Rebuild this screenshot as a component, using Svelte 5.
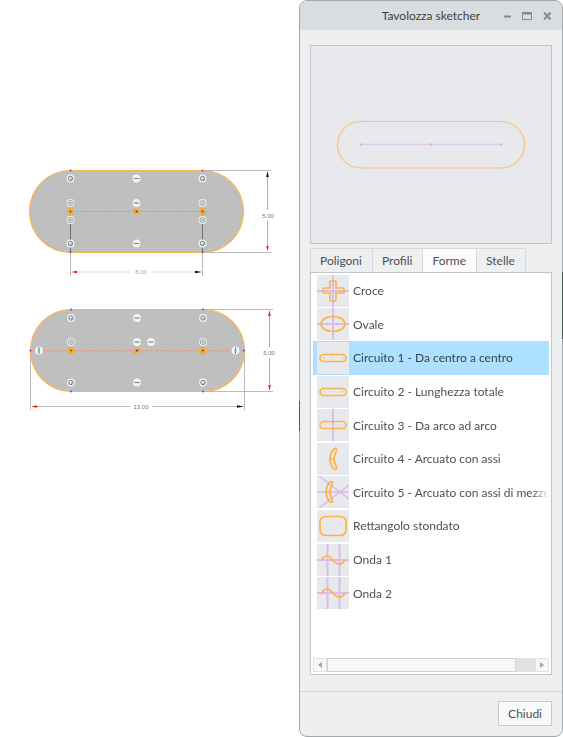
<script>
	const tabs = ['Poligoni', 'Profili', 'Forme', 'Stelle'];
	const shapes = [
		{ icon: 'cross', label: 'Croce' },
		{ icon: 'oval', label: 'Ovale' },
		{ icon: 'slot', label: 'Circuito 1 - Da centro a centro' },
		{ icon: 'slot', label: 'Circuito 2 - Lunghezza totale' },
		{ icon: 'slot-axis', label: 'Circuito 3 - Da arco ad arco' },
		{ icon: 'arc', label: 'Circuito 4 - Arcuato con assi' },
		{ icon: 'arc-axes', label: 'Circuito 5 - Arcuato con assi di mezze' },
		{ icon: 'rounded', label: 'Rettangolo stondato' },
		{ icon: 'wave', label: 'Onda 1' },
		{ icon: 'wave', label: 'Onda 2' }
	];

	let activeTab = $state('Forme');
	let selected = $state(2);
</script>

<!-- constraint badge: tangent, coincident, horizontal or vertical -->
{#snippet badge(kind, x, y)}
	<g transform="translate({x} {y})">
		<circle r="3.9" fill="#f4f4f4" />
		{#if kind === 'tangent'}
			<circle r="2.2" fill="none" stroke="#666" stroke-width="0.9" />
			<path d="M0 0L1.6 1.4" stroke="#48b4d8" stroke-width="1.4" />
		{:else if kind === 'point'}
			<circle r="2.7" fill="#d9e2e4" stroke="#999" stroke-width="0.8" />
			<circle r="1.5" fill="#8fcce0" />
		{:else if kind === 'vertical'}
			<path d="M0 -3V3" stroke="#666" stroke-width="1.1" />
			<circle r="1.2" fill="#79bcd3" />
		{:else}
			<path d="M-2.8 0H2.8" stroke="#888" stroke-width="1.1" />
			{#if kind === 'mid'}<circle r="1.3" fill="#79bcd3" />{/if}
		{/if}
	</g>
{/snippet}

{#snippet center(x, y)}
	<g transform="translate({x} {y})">
		<path d="M-4.5 0H4.5M0 -4.5V4.5M-3 -3L3 3M-3 3L3 -3" stroke="#fba41c" stroke-width="1.1" />
		<circle r="2.2" fill="#fba41c" />
		<rect x="-0.7" y="-0.7" width="1.4" height="1.4" fill="#3a2c70" />
	</g>
{/snippet}

{#snippet middle(x, y)}
	<g transform="translate({x} {y})">
		<path d="M-2.8 -2.5L2.8 2.5M-2.8 2.5L2.8 -2.5" stroke="#fba41c" stroke-width="2" />
		<rect x="-0.8" y="-0.8" width="1.6" height="1.6" fill="#2b2b80" />
	</g>
{/snippet}

{#snippet vertex(x, y)}
	<rect x={x - 0.8} y={y - 0.8} width="1.6" height="1.6" fill="#4038f0" />
{/snippet}

<main class="page">
	<section class="sketches">
		<svg viewBox="0 0 299 120" role="img" aria-label="Circuito da centro a centro">
			<rect x="29.5" y="10.5" width="214" height="82" rx="41" fill="#bfbfbf" />
			<path d="M203 10.5H271M203 92.5H271M202.5 92V116M70.5 92V116" stroke="#aaa" stroke-width="0.8" />
			<path d="M70.5 60V92M202.5 60V92" stroke="#666" stroke-width="0.9" />
			<rect x="29.5" y="10.5" width="214" height="82" rx="41" fill="none" stroke="#fcb64e" stroke-width="1.2" />
			<path d="M71 51.5H202" stroke="#f08a70" stroke-width="0.9" stroke-dasharray="2 1" />
			<path d="M267.5 14V50M267.5 61V90" stroke="#999" stroke-width="0.8" />
			<path d="M75 112H131M151 112H198" stroke="#ddd" />
			<path d="M267.5 11L268.8 17H266.2Z M202 112L195 110.7V113.3Z" fill="#111" />
			<path d="M267.5 91L268.8 86H266.2Z M71 112L77 110.7V113.3Z" fill="#f21b1b" />
			<text x="268" y="58" font-size="6">5.00</text>
			<text x="141" y="114" font-size="6" class="faint">8.00</text>
			{#each [70.5, 202.5] as x}
				{@render vertex(x, 10.5)}
				{@render vertex(x, 92)}
				{@render center(x, 51.5)}
				{@render badge('tangent', x, 18.5)}
				{@render badge('point', x, 43)}
				{@render badge('point', x, 60)}
				{@render badge('tangent', x, 83.5)}
			{/each}
			{@render middle(136.5, 51.5)}
			{@render badge('horizontal', 136.5, 18.5)}
			{@render badge('mid', 136.5, 43)}
			{@render badge('horizontal', 136.5, 83.5)}
		</svg>

		<svg viewBox="0 0 299 115" role="img" aria-label="Circuito lunghezza totale">
			<path d="M203 9.5H273M203 91.5H273M30.5 51V110M244.5 51V110" stroke="#aaa" stroke-width="0.8" />
			<rect x="30.5" y="9.5" width="214" height="82" rx="41" fill="#bfbfbf" stroke="#fcb64e" stroke-width="1.2" />
			<path d="M31 50.7H244" stroke="#f08a70" stroke-width="0.9" stroke-dasharray="2 1" />
			<path d="M269.5 12V47M269.5 58V89" stroke="#999" stroke-width="0.8" />
			<path d="M33 106.5H130M152 106.5H240" stroke="#aaa" stroke-width="0.8" />
			<path d="M244 106.5L237 105.2V107.8Z" fill="#111" />
			<path d="M31 106.5L37 105.2V107.8Z M269.5 10L270.8 16H268.2Z M269.5 91L270.8 85H268.2Z" fill="#f21b1b" />
			<text x="269" y="55" font-size="6">5.00</text>
			<text x="141" y="109" font-size="6">13.00</text>
			{#each [71, 203] as x}
				{@render vertex(x, 9.5)}
				{@render vertex(x, 91.5)}
				{@render center(x, 50.5)}
				{@render badge('tangent', x, 18)}
				{@render badge('point', x, 42)}
				{@render badge('tangent', x, 82.5)}
			{/each}
			{@render vertex(30.5, 50.5)}
			{@render vertex(244, 50.5)}
			{@render middle(137, 50.5)}
			{@render badge('horizontal', 137, 18)}
			{@render badge('mid', 137, 42)}
			{@render badge('horizontal', 151, 42)}
			{@render badge('horizontal', 137, 82.5)}
			{@render badge('vertical', 39, 50.5)}
			{@render badge('vertical', 235.5, 50.5)}
		</svg>
	</section>

	<section class="palette" aria-labelledby="palette-title">
		<header class="titlebar">
			<h1 id="palette-title">Tavolozza sketcher</h1>
			<div class="controls">
				<button type="button" aria-label="Riduci a icona">
					<svg viewBox="0 0 12 12"><path d="M3 6.5H10" stroke="#85898c" stroke-width="2" /></svg>
				</button>
				<button type="button" aria-label="Ingrandisci">
					<svg viewBox="0 0 12 12"><path d="M1.5 2.5H10.5V9.5H1.5Z" fill="none" stroke="#85898c" /><path d="M1 3.5H11" stroke="#85898c" stroke-width="2" /></svg>
				</button>
				<button type="button" aria-label="Chiudi finestra">
					<svg viewBox="0 0 12 12"><path d="M3 2.5L9.5 9.5M9.5 2.5L3 9.5" stroke="#85898c" stroke-width="2" /></svg>
				</button>
			</div>
		</header>

		<div class="content">
			<div class="preview">
				<svg viewBox="0 0 240 197" role="img" aria-label="Anteprima">
					<rect x="26.5" y="75.5" width="187" height="46.5" rx="23.25" fill="none" stroke="#fbc07c" stroke-width="1.2" />
					<path d="M50 98.5H190" stroke="#dccbe9" stroke-width="1.5" />
					<path d="M49 97.5h2v2h-2zM119 97.5h2v2h-2zM189 97.5h2v2h-2z" fill="#dfb396" />
					<path d="M49 75h2v1h-2zM189 75h2v1h-2zM49 121.5h2v1h-2zM189 121.5h2v1h-2z" fill="#b9cbd0" />
				</svg>
			</div>

			<div class="tabs" role="tablist">
				{#each tabs as tab}
					<button type="button" role="tab" class:active={tab === activeTab} aria-selected={tab === activeTab} onclick={() => (activeTab = tab)}>{tab}</button>
				{/each}
			</div>

			<div class="listbox">
				<div class="list">
					{#each shapes as shape, i}
						<button type="button" class="row" class:selected={i === selected} aria-pressed={i === selected} onclick={() => (selected = i)}>
							<svg class="thumb" viewBox="0 0 32 32" aria-hidden="true">
								{#if shape.icon === 'cross'}
									<path class="axis" d="M16 0V32M0 16H32" />
									<path class="line" d="M14 6H18Q19 6 19 7V13H26Q27 13 27 14V17Q27 18 26 18H19V25Q19 26 18 26H14Q13 26 13 25V18H7Q6 18 6 17V14Q6 13 7 13H13V7Q13 6 14 6Z" />
								{:else if shape.icon === 'oval'}
									<path class="axis" d="M16 0V32M0 16H32" />
									<ellipse class="line" cx="16" cy="16" rx="12" ry="7.5" />
								{:else if shape.icon === 'slot'}
									<rect class="line" x="3" y="12.5" width="26" height="7" rx="3.5" />
									<path d="M6 15h1.5v1.5H6zM15.3 15h1.5v1.5h-1.5zM25 15h1.5v1.5H25z" fill="#f9c36b" />
								{:else if shape.icon === 'slot-axis'}
									<path class="axis" d="M16 0V32" />
									<rect class="line" x="3" y="12.5" width="26" height="7" rx="3.5" />
									<path d="M4 16H28" stroke="#e5d9e8" />
								{:else if shape.icon === 'arc' || shape.icon === 'arc-axes'}
									{#if shape.icon === 'arc-axes'}
										<path class="axis thin" d="M0 16H32M2 0L32 23M2 32L32 9" />
									{/if}
									<g transform={shape.icon === 'arc-axes' ? 'translate(-4 0)' : null}>
										<path class="line" d="M19.5 7.5C18.5 10 17 12.5 17 16S18.5 22.5 19.7 24.5C20 26.5 17.5 27 16.5 25.5C14.5 23 13 20 13 16S14.5 9 16.5 6.5C17.5 5 20 5.5 19.5 7.5Z" />
										<path d="M13 16H17" stroke="#f9b548" />
									</g>
								{:else if shape.icon === 'rounded'}
									<rect class="line" x="3" y="6.5" width="26" height="19" rx="5.5" />
								{:else}
									<path class="axis" d="M10.5 0V32M22.5 0V32M0 16H32" />
									<path class="line" d="M5 16C6 13 8 12 10.5 12C15 12 16 20 22 20C25 20 27 18 28 16" />
								{/if}
							</svg>
							<span class="label">{shape.label}</span>
						</button>
					{/each}
				</div>

				<div class="scrollbar">
					<button type="button" aria-label="Scorri a sinistra">
						<svg viewBox="0 0 12 12"><path d="M8 3V9L4 6Z" fill="#a2a4a6" /></svg>
					</button>
					<div class="track"><div class="handle"></div></div>
					<button type="button" aria-label="Scorri a destra">
						<svg viewBox="0 0 12 12"><path d="M4 3V9L8 6Z" fill="#a2a4a6" /></svg>
					</button>
				</div>
			</div>
		</div>

		<footer>
			<button type="button" class="close">Chiudi</button>
		</footer>
	</section>
</main>

<style>
	:global(body) {
		background: #fff;
	}

	.page {
		display: grid;
		grid-template-columns: 299fr 264fr;
		min-height: 100vh;
		font-family: Lato, 'Open Sans', sans-serif;
		font-size: 12px;
		color: #4d5154;
	}
	button {
		font: inherit;
		color: inherit;
		margin: 0;
		padding: 0;
		border: 0;
		background: none;
		box-sizing: border-box;
	}
	svg {
		display: block;
	}

	.sketches {
		display: flex;
		flex-direction: column;
		gap: 20px;
		padding-top: 160px;
	}
	.sketches text {
		font-family: 'Liberation Sans', sans-serif;
		text-anchor: middle;
		fill: #777;
	}
	.sketches .faint {
		fill: #aaa;
	}

	.palette {
		position: relative;
		display: flex;
		flex-direction: column;
		min-width: 0;
		box-sizing: border-box;
		border: 1px solid #a5a8aa;
		border-radius: 8px;
		background: #eeeff1;
	}
	/* dark window edge showing through on both sides */
	.palette::before,
	.palette::after {
		content: '';
		position: absolute;
		width: 1px;
		background: #4f5a58;
	}
	.palette::before {
		left: -1px;
		top: 400px;
		height: 30px;
	}
	.palette::after {
		right: -1px;
		top: 271px;
		height: 67px;
	}
	.titlebar {
		display: grid;
		grid-template-columns: 1fr auto 1fr;
		align-items: center;
		height: 29px;
		padding: 0 9px;
		border-radius: 7px 7px 0 0;
		background: #dadddf;
	}
	h1 {
		grid-column: 2;
		margin: 0;
		font-size: 12px;
		font-weight: 400;
		line-height: 16px;
		color: #3c4043;
		white-space: nowrap;
	}
	.controls {
		display: flex;
		justify-content: flex-end;
		gap: 8px;
	}
	.controls svg,
	.scrollbar svg {
		width: 12px;
		height: 12px;
	}

	.content {
		flex: 1;
		display: flex;
		flex-direction: column;
		padding: 15px 10px 16px;
	}
	.preview {
		border: 1px solid #c3c5c8;
		background: #e8e9ed;
	}
	.tabs {
		display: flex;
		margin-top: 4px;
	}
	.tabs button {
		height: 24px;
		padding: 0 10px 0 9px;
		border: 1px solid #d7d9db;
		border-width: 1px 1px 0 0;
		line-height: 20px;
	}
	.tabs button:first-child {
		border-left-width: 1px;
	}
	.tabs .active {
		background: #fcfcfc;
	}

	.listbox {
		flex: 1;
		display: flex;
		flex-direction: column;
		justify-content: space-between;
		padding: 1px 2px 2px;
		border: 1px solid #c3c5c8;
		background: #fff;
	}
	.list {
		display: grid;
		grid-template-columns: minmax(0, 1fr);
		grid-template-rows: repeat(10, 1fr);
		height: 336px;
	}
	.row {
		display: flex;
		align-items: center;
		gap: 4px;
		padding-left: 4px;
		text-align: left;
		overflow: hidden;
	}
	.row.selected {
		background: #ade1ff;
		color: #33454f;
	}
	.thumb {
		flex: none;
		width: 32px;
		height: 32px;
		background: #e8e9ed;
	}
	.thumb .axis {
		fill: none;
		stroke: #dcbbea;
		stroke-width: 2;
	}
	.thumb .thin {
		stroke-width: 1.5;
	}
	.thumb .line {
		fill: none;
		stroke: #f9b548;
		stroke-width: 1.7;
	}
	.label {
		flex: 1;
		white-space: nowrap;
		overflow: hidden;
		mask-image: linear-gradient(to left, transparent, #000 16px);
	}

	.scrollbar {
		display: flex;
		height: 14px;
	}
	.scrollbar button {
		flex: none;
		width: 14px;
		border: 1px solid #e1e3e5;
		background: #f8f8f8;
	}
	.track {
		flex: 1;
		background: #e0e2e4;
	}
	.handle {
		box-sizing: border-box;
		width: 91%;
		height: 100%;
		border: 1px solid #d0d2d4;
		background: #f8f8f8;
	}

	footer {
		display: flex;
		justify-content: flex-end;
		padding: 9px 10px 10px;
		border-top: 1px solid #d0d2d4;
	}
	.close {
		height: 25px;
		padding: 0 9px;
		border: 1px solid #c8cacc;
		background: #fafafa;
	}
</style>
